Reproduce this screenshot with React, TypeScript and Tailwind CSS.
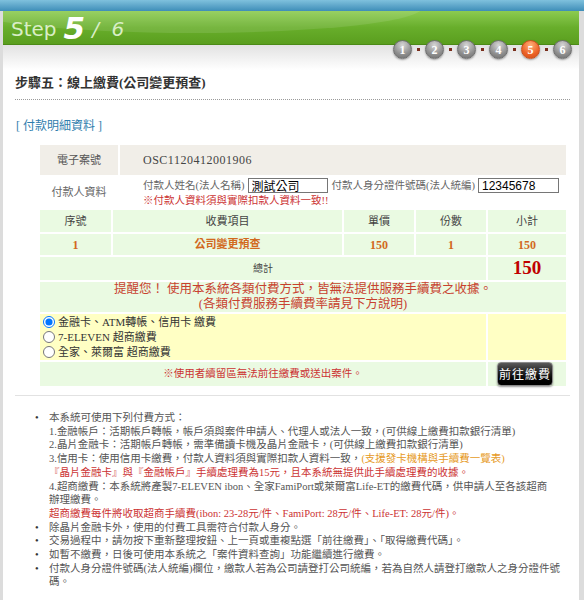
import React from 'react';

const STEPS = [1, 2, 3, 4, 5, 6];

function StepDot({ n, active }: { n: number; active: boolean }) {
  return (
    <div
      className={
        active
          ? 'w-[19px] h-[19px] rounded-full flex items-center justify-center text-white text-[12px] font-bold leading-none border border-[#c8501e] bg-[radial-gradient(circle_at_50%_25%,#ffb07a,#ec6126_60%,#d14d14)] shadow-[0_1px_2px_rgba(0,0,0,0.35)]'
          : 'w-[19px] h-[19px] rounded-full flex items-center justify-center text-white text-[12px] font-bold leading-none border border-[#6f6f6f] bg-[radial-gradient(circle_at_50%_25%,#d6d6d6,#8e8e8e_60%,#6a6a6a)] shadow-[0_1px_2px_rgba(0,0,0,0.35)]'
      }
    >
      {n}
    </div>
  );
}

export default function App() {
  return (
    <div className="w-[584px] min-h-[600px] bg-white text-[#555] font-['Liberation_Serif','Noto_Sans_CJK_TC',serif]">
      {/* top strip */}
      <div className="h-[11px] bg-gradient-to-b from-[#7fc1dd] to-[#3e8eb8]" />

      <div className="border-l-[3px] border-r-[5px] border-[#dcdcdc] min-h-[589px]">
        {/* Step header */}
        <div className="relative h-[34px] bg-gradient-to-b from-[#8ccb50] via-[#68ae2b] to-[#5a9e1e] border-b border-[#4b8a16] flex items-center pl-[8px] font-['DejaVu_Sans',sans-serif]">
          <div className="absolute inset-0 overflow-hidden">
            <div className="absolute -left-[40px] -top-[30px] w-[460px] h-[52px] rounded-[50%] bg-white/10" />
          </div>
          <span className="relative text-[20px] leading-[24px] text-[#d9eec6] mr-[7px] mt-[3px]">Step</span>
          <span className="relative text-[31px] leading-[34px] font-bold italic text-white">5</span>
          <span className="relative text-[20px] leading-[24px] italic text-[#d9eec6] ml-[7px] mt-[3px]">/&nbsp;&nbsp;6</span>
        </div>

        {/* step dots */}
        <div className="h-[25px] bg-gradient-to-b from-[#e2e2e2] to-white flex justify-end items-start pr-[7px]">
          <div className="relative -mt-[5px] flex items-center">
            {STEPS.map((n, i) => (
              <React.Fragment key={n}>
                {i > 0 && (
                  <div className="w-[13px] flex justify-center">
                    <div className="w-[3px] h-[3px] bg-[#7a2e1c]" />
                  </div>
                )}
                <StepDot n={n} active={n === 5} />
              </React.Fragment>
            ))}
          </div>
        </div>

        {/* title */}
        <div className="pl-[12px] pt-[5px] text-[13px] leading-[16px] font-bold text-[#333]">
          步驟五：線上繳費(公司變更預查)
        </div>
        <div className="ml-[12px] mr-[9px] mt-[8px] border-b border-dotted border-[#9a9a9a]" />

        <div className="pl-[13px] mt-[18px] text-[12px] leading-[16px] text-[#2f7dad]">
          [ 付款明細資料 ]
        </div>

        {/* info table */}
        <div className="ml-[37px] mt-[11px] w-[526px] text-[11px]">
          <div className="grid grid-cols-[78px_446px] gap-[2px]">
            <div className="h-[30px] bg-[#f1eee8] flex items-center justify-center text-[#555]">電子案號</div>
            <div className="h-[30px] bg-[#f1eee8] flex items-center pl-[23px] text-[12px] text-[#444] tracking-[0.5px]">
              OSC1120412001906
            </div>
            <div className="h-[31px] flex items-center justify-center text-[#666]">付款人資料</div>
            <div className="h-[31px] pl-[23px] pt-[1px] flex flex-col text-[10.5px] whitespace-nowrap">
              <div className="flex items-center h-[15px] text-[#666]">
                <span className="shrink-0">付款人姓名(法人名稱)</span>
                <input
                  readOnly
                  value="測試公司"
                  className="shrink-0 ml-[3px] w-[80px] h-[15px] border border-[#767676] px-[3px] text-[12px] text-black font-['Noto_Sans_CJK_TC',sans-serif] outline-none"
                />
                <span className="shrink-0 ml-[4px]">付款人身分證件號碼(法人統編)</span>
                <input
                  readOnly
                  value="12345678"
                  className="shrink-0 ml-[3px] w-[81px] h-[15px] border border-[#767676] px-[3px] text-[12px] text-black font-['Liberation_Sans',sans-serif] outline-none"
                />
              </div>
              <div className="mt-[1px] text-[#cc3333] leading-[14px]">※付款人資料須與實際扣款人資料一致!!</div>
            </div>
          </div>

          {/* fee table */}
          <div className="mt-[2px] grid grid-cols-[71px_229px_70px_70px_78px] gap-[2px]">
            <div className="h-[22px] bg-[#eafae2] flex items-center justify-center text-[#444]">序號</div>
            <div className="h-[22px] bg-[#eafae2] flex items-center justify-center text-[#444]">收費項目</div>
            <div className="h-[22px] bg-[#eafae2] flex items-center justify-center text-[#444]">單價</div>
            <div className="h-[22px] bg-[#eafae2] flex items-center justify-center text-[#444]">份數</div>
            <div className="h-[22px] bg-[#eafae2] flex items-center justify-center text-[#444]">小計</div>

            <div className="h-[21px] bg-[#eafae2] flex items-center justify-center text-[#d2691e] font-bold text-[12px]">1</div>
            <div className="h-[21px] bg-[#eafae2] flex items-center justify-center text-[#d2691e] font-bold">公司變更預查</div>
            <div className="h-[21px] bg-[#eafae2] flex items-center justify-center text-[#d2691e] font-bold text-[12px]">150</div>
            <div className="h-[21px] bg-[#eafae2] flex items-center justify-center text-[#d2691e] font-bold text-[12px]">1</div>
            <div className="h-[21px] bg-[#eafae2] flex items-center justify-center text-[#d2691e] font-bold text-[12px]">150</div>

            <div className="col-span-4 h-[23px] bg-[#eafae2] flex items-center justify-center text-[#444] text-[10px]">總計</div>
            <div className="h-[23px] bg-[#eafae2] flex items-center justify-center text-[#c00000] font-bold text-[19px]">150</div>

            <div className="col-span-5 h-[30px] bg-[#eafae2] flex flex-col items-center justify-center text-[#c8412f] text-[12.5px] leading-[15px]">
              <span>提醒您！ 使用本系統各類付費方式，皆無法提供服務手續費之收據。</span>
              <span>(各類付費服務手續費率請見下方說明)</span>
            </div>

            <div className="col-span-4 h-[46px] bg-[#ffffc4] flex flex-col justify-center pl-[3px] text-[11px] text-[#333] leading-[15px]">
              <label className="flex items-center">
                <input type="radio" name="pay" defaultChecked className="w-[12px] h-[12px] m-0 mr-[3px]" />
                金融卡、ATM轉帳、信用卡 繳費
              </label>
              <label className="flex items-center">
                <input type="radio" name="pay" className="w-[12px] h-[12px] m-0 mr-[3px]" />
                7-ELEVEN 超商繳費
              </label>
              <label className="flex items-center">
                <input type="radio" name="pay" className="w-[12px] h-[12px] m-0 mr-[3px]" />
                全家、萊爾富 超商繳費
              </label>
            </div>
            <div className="h-[46px] bg-[#ffffc4]" />

            <div className="col-span-4 h-[24px] bg-[#eafae2] flex items-center justify-center text-[#cc3333] text-[10.5px]">
              ※使用者續留區無法前往繳費或送出案件。
            </div>
            <div className="h-[24px] bg-[#eafae2] flex items-center pl-[9px]">
              <button className="w-[56px] h-[24px] rounded-[4px] border border-[#8a8a8a] bg-gradient-to-b from-[#5a5a5a] via-[#1a1a1a] to-black text-white text-[12px] tracking-[1px] font-['Noto_Sans_CJK_TC',sans-serif] shadow-[0_1px_2px_rgba(0,0,0,0.4)]">
                前往繳費
              </button>
            </div>
          </div>
        </div>

        <div className="ml-[12px] mr-[9px] mt-[9px] border-b border-[#e2e2e2]" />

        {/* notes */}
        <div className="mt-[15px] pl-[32px] text-[10.5px] leading-[13.7px] text-[#555] whitespace-nowrap">
          <div className="flex">
            <span className="w-[14px] text-[#333]">•</span>
            <div>
              <div>本系統可使用下列付費方式：</div>
              <div>1.金融帳戶：活期帳戶轉帳，帳戶須與案件申請人、代理人或法人一致，(可供線上繳費扣款銀行清單)</div>
              <div>2.晶片金融卡：活期帳戶轉帳，需準備讀卡機及晶片金融卡，(可供線上繳費扣款銀行清單)</div>
              <div>
                3.信用卡：使用信用卡繳費，付款人資料須與實際扣款人資料一致，
                <span className="text-[#e69a1e]">(支援發卡機構與手續費一覽表)</span>
              </div>
              <div className="text-[#cc3333]">『晶片金融卡』與『金融帳戶』手續處理費為15元，且本系統無提供此手續處理費的收據。</div>
              <div>4.超商繳費：本系統將產製7-ELEVEN ibon、全家FamiPort或萊爾富Life-ET的繳費代碼，供申請人至各該超商</div>
              <div>辦理繳費。</div>
              <div className="text-[#cc3333]">超商繳費每件將收取超商手續費(ibon: 23-28元/件、FamiPort: 28元/件、Life-ET: 28元/件)。</div>
            </div>
          </div>
          <div className="flex">
            <span className="w-[14px] text-[#333]">•</span>
            <div>除晶片金融卡外，使用的付費工具需符合付款人身分。</div>
          </div>
          <div className="flex">
            <span className="w-[14px] text-[#333]">•</span>
            <div>交易過程中，請勿按下重新整理按鈕、上一頁或重複點選「前往繳費」、「取得繳費代碼」。</div>
          </div>
          <div className="flex">
            <span className="w-[14px] text-[#333]">•</span>
            <div>如暫不繳費，日後可使用本系統之「案件資料查詢」功能繼續進行繳費。</div>
          </div>
          <div className="flex">
            <span className="w-[14px] text-[#333]">•</span>
            <div>
              <div>付款人身分證件號碼(法人統編)欄位，繳款人若為公司請登打公司統編，若為自然人請登打繳款人之身分證件號</div>
              <div>碼。</div>
            </div>
          </div>
        </div>
      </div>
    </div>
  );
}
